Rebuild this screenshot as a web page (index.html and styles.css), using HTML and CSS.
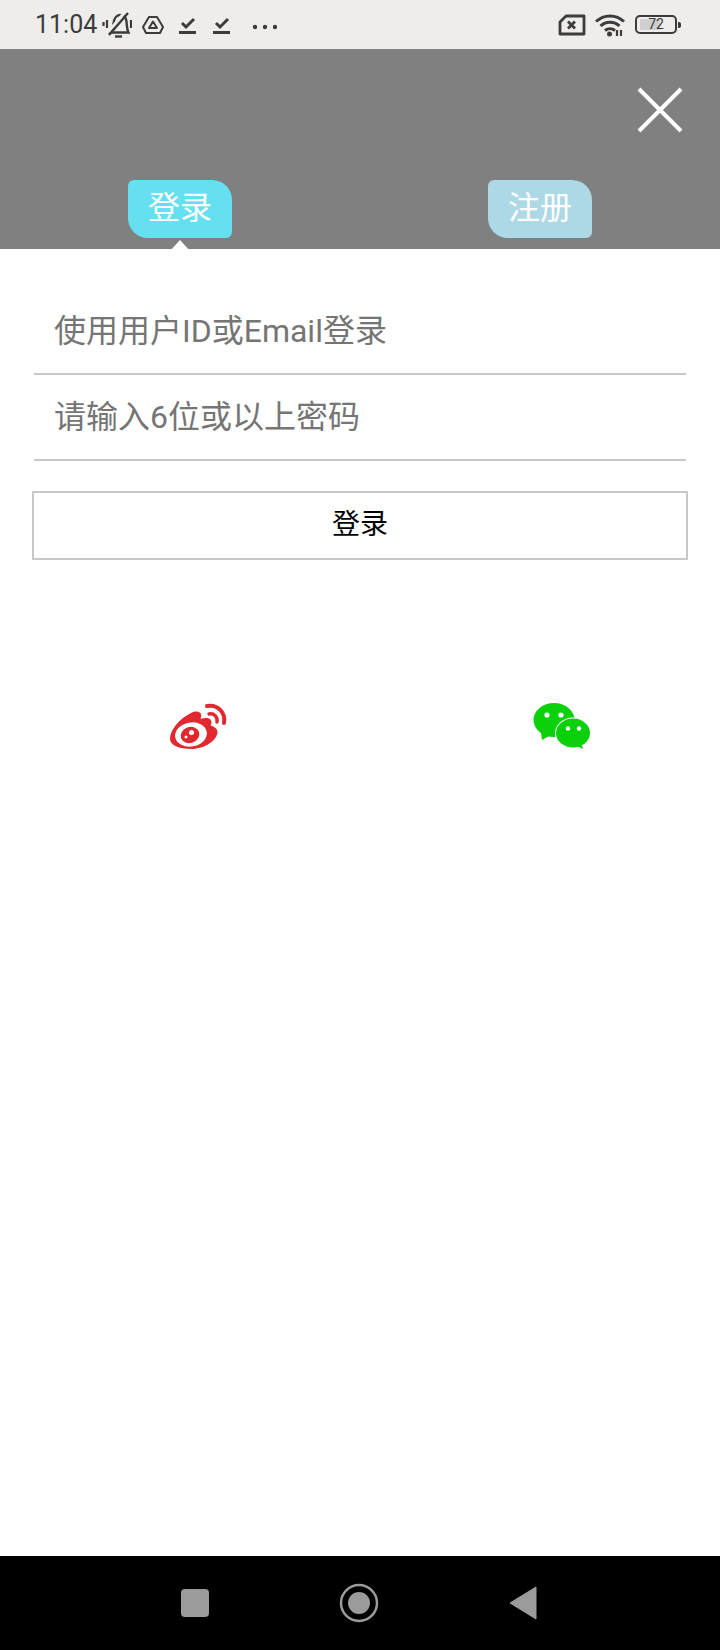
FILE: index.html
```html
<!DOCTYPE html>
<html>
<head>
  <title>登录</title>
  <meta charset="utf-8">
  <meta name="viewport" content="width=device-width, initial-scale=1">
  <link rel="stylesheet" href="styles.css">
</head>
<body>

  <div class="statusbar">
    <span class="time">11:04</span>
    <svg class="ic-bell" viewBox="0 0 30 26" width="30" height="26">
      <path d="M9 20.500c2-2 2-5 2.500-9C12 6.500 14.500 3 18 3c3.500 0 6 2.500 6.500 6.500.4 4 .4 8 2 11z" fill="none" stroke="#3c3c3c" stroke-width="2.400"/>
      <path d="M13 24.500h7" fill="none" stroke="#3c3c3c" stroke-width="2.400"/>
      <path d="M7 19L23 0" fill="none" stroke="#eeedeb" stroke-width="3"/>
      <path d="M7 23L26 1" fill="none" stroke="#3c3c3c" stroke-width="2.400"/>
      <path d="M5 8v8M1.500 10v4M29 8v8" stroke="#3c3c3c" stroke-width="2.200"/>
    </svg>
    <svg class="ic-drive" viewBox="0 0 22 20" width="22" height="20">
      <path d="M7 2h8l6 10-3 6H4L1 12z" fill="none" stroke="#3c3c3c" stroke-width="2" stroke-linejoin="round"/>
      <path d="M11 6.500l4 6.500H7z" fill="none" stroke="#3c3c3c" stroke-width="2" stroke-linejoin="round"/>
    </svg>
    <svg class="ic-check" viewBox="0 0 18 20" width="18" height="20">
      <path d="M3 8l4 4 8-8" fill="none" stroke="#3c3c3c" stroke-width="3"/>
      <path d="M0 17.500h17" stroke="#3c3c3c" stroke-width="3"/>
    </svg>
    <svg class="ic-check" viewBox="0 0 18 20" width="18" height="20">
      <path d="M3 8l4 4 8-8" fill="none" stroke="#3c3c3c" stroke-width="3"/>
      <path d="M0 17.500h17" stroke="#3c3c3c" stroke-width="3"/>
    </svg>
    <svg class="ic-dots" viewBox="0 0 26 6" width="26" height="6">
      <circle cx="3" cy="3" r="2.200" fill="#3c3c3c"/>
      <circle cx="13" cy="3" r="2.200" fill="#3c3c3c"/>
      <circle cx="23" cy="3" r="2.200" fill="#3c3c3c"/>
    </svg>

    <div class="status-right">
      <svg class="ic-sim" viewBox="0 0 28 22" width="28" height="22">
        <path d="M8 2h18v18H2V8z" fill="none" stroke="#3c3c3c" stroke-width="2.800" stroke-linejoin="round"/>
        <path d="M10 7.500l7 7M17 7.500l-7 7" stroke="#3c3c3c" stroke-width="2.800"/>
      </svg>
      <svg class="ic-wifi" viewBox="0 0 30 24" width="30" height="24">
        <path d="M1 8.500c8-7.500 20-7.500 28 0M5.500 13c5.500-5 13.500-5 19 0M10 17.500c3-2.500 7-2.500 10 0" fill="none" stroke="#3c3c3c" stroke-width="3"/>
        <circle cx="14.500" cy="21" r="2.500" fill="#3c3c3c"/>
        <path d="M22 17v6M26 17v6" stroke="#3c3c3c" stroke-width="2.200"/>
      </svg>
      <div class="battery">
        <div class="battery-body">
          <span class="battery-fill"></span>
          <span class="battery-num">72</span>
        </div>
        <span class="battery-nub"></span>
      </div>
    </div>
  </div>

  <div class="top">
    <div class="close-row">
      <svg viewBox="0 0 46 46" width="46" height="46">
        <path d="M2 2l42 42M44 2L2 44" stroke="#fff" stroke-width="4"/>
      </svg>
    </div>
    <div class="tabs">
      <div class="tab tab-on">登录</div>
      <div class="tab tab-off">注册</div>
    </div>
  </div>

  <div class="main">
    <div class="form">
      <div class="field">使用用户ID或Email登录</div>
      <div class="field">请输入6位或以上密码</div>
    </div>
    <div class="submit">登录</div>

    <div class="social">
      <!-- weibo -->
      <svg viewBox="0 0 90 70" width="90" height="70">
        <path d="M20 54c0-9 9-20 21-26 5-2.500 9-1.500 10 1 .5 2 0 3-.5 5 4-1.500 8-1.500 10 .5 1.500 2 1 4 0 6 4 1 7 3.500 7 6.500 0 8-13 17-26 17-13 0-21.500-4-21.500-10z" fill="#e0282e"/>
        <ellipse cx="41" cy="49.500" rx="16" ry="12" fill="#fff" transform="rotate(-10 41 49.500)"/>
        <ellipse cx="40" cy="50" rx="9.500" ry="8" fill="#e0282e" transform="rotate(-20 40 50)"/>
        <circle cx="41.500" cy="47.500" r="2.500" fill="#fff"/>
        <circle cx="36" cy="52" r="1.500" fill="#fff"/>
        <path d="M57 21c10-2 19 6 17 17" fill="none" stroke="#e0282e" stroke-width="4" stroke-linecap="round"/>
        <path d="M59 29c5-1 9 3 8 8" fill="none" stroke="#e0282e" stroke-width="3.400" stroke-linecap="round"/>
      </svg>
      <!-- wechat -->
      <svg viewBox="0 0 90 70" width="90" height="70">
        <path d="M26 48l1 7 9-5z" fill="#0bd10b"/>
        <ellipse cx="39" cy="35" rx="20.500" ry="17" fill="#0bd10b"/>
        <circle cx="32" cy="30" r="2.600" fill="#fff"/>
        <circle cx="46" cy="30" r="2.600" fill="#fff"/>
        <ellipse cx="58" cy="48" rx="18" ry="15.500" fill="#fff"/>
        <path d="M61 60.500l7 3.500-2-7z" fill="#0bd10b"/>
        <ellipse cx="58" cy="48" rx="17" ry="14.500" fill="#0bd10b"/>
        <circle cx="53" cy="43.500" r="2.200" fill="#fff"/>
        <circle cx="64" cy="43.500" r="2.200" fill="#fff"/>
      </svg>
    </div>
  </div>

  <div class="navbar">
    <span class="nav-square"></span>
    <svg viewBox="0 0 40 40" width="40" height="40">
      <circle cx="20" cy="20" r="18" fill="none" stroke="#9b9b9b" stroke-width="2.500"/>
      <circle cx="20" cy="20" r="11" fill="#9b9b9b"/>
    </svg>
    <svg viewBox="0 0 28 34" width="28" height="34">
      <path d="M27 1v32L1 17z" fill="#9b9b9b" stroke="#9b9b9b" stroke-width="1" stroke-linejoin="round"/>
    </svg>
  </div>

</body>
</html>
```

FILE: styles.css
```css
* {
  box-sizing: border-box;
}
body {
  margin: 0;
  height: 1650px;
  display: flex;
  flex-direction: column;
  background-color: #fff;
  font-family: Roboto, "Noto Sans CJK SC", sans-serif;
}
svg {
  display: block;
  flex-shrink: 0;
}

/* status bar */
.statusbar {
  height: 49px;
  display: flex;
  align-items: center;
  padding-left: 35px;
  background-color: #eeedeb;
  color: #3c3c3c;
}
.time {
  font-size: 25px;
  width: 66px;
}
.ic-bell {
  margin-left: 1px;
}
.ic-drive {
  margin-left: 10px;
}
.ic-check {
  margin-left: 15px;
}
.ic-check + .ic-check {
  margin-left: 16px;
}
.ic-dots {
  margin-left: 21px;
  margin-top: 4px;
}
.status-right {
  margin-left: auto;
  padding-right: 39px;
  display: flex;
  align-items: center;
}
.ic-wifi {
  margin-left: 9px;
}
.battery {
  margin-left: 10px;
  display: flex;
  align-items: center;
}
.battery-body {
  position: relative;
  width: 42px;
  height: 19px;
  border: 2px solid #3c3c3c;
  border-radius: 5px;
  display: flex;
  align-items: center;
  justify-content: center;
}
.battery-fill {
  position: absolute;
  left: 3px;
  top: 2px;
  bottom: 2px;
  width: 20px;
  background-color: #cfcfcf;
}
.battery-num {
  position: relative;
  font-size: 14px;
  line-height: 15px;
}
.battery-nub {
  width: 3px;
  height: 6px;
  margin-left: 1px;
  background-color: #3c3c3c;
  border-radius: 0 2px 2px 0;
}

/* grey header with the two tabs */
.top {
  height: 200px;
  background-color: #808080;
  display: flex;
  flex-direction: column;
}
.close-row {
  display: flex;
  justify-content: flex-end;
  padding: 38px 37px 0 0;
}
.tabs {
  display: flex;
  justify-content: space-between;
  padding: 0 128px;
  margin-top: 47px;
}
.tab {
  position: relative;
  width: 104px;
  height: 58px;
  line-height: 56px;
  text-align: center;
  font-size: 32px;
  color: #fff;
  border-radius: 6px 20px 6px 20px;
}
.tab-on {
  background-color: #66e0f0;
}
.tab-off {
  background-color: #add8e6;
}
.tab-on::after {
  content: "";
  position: absolute;
  left: 42px;
  top: 60px;
  border-left: 10px solid transparent;
  border-right: 10px solid transparent;
  border-bottom: 11px solid #fff;
}

/* login form */
.main {
  flex: 1;
  background-color: #fff;
}
.form {
  margin: 40px 34px 0;
}
.field {
  height: 86px;
  line-height: 84px;
  padding-left: 20px;
  font-size: 32px;
  color: #757575;
  border-bottom: 2px solid #c8c8c8;
}
.submit {
  margin: 30px 32px 0;
  height: 69px;
  line-height: 63px;
  text-align: center;
  font-size: 28px;
  color: #000;
  border: 2px solid #c8c8c8;
}
.social {
  display: flex;
  justify-content: space-between;
  padding: 0 115px 0 150px;
  margin-top: 125px;
}

/* navigation bar */
.navbar {
  height: 94px;
  background-color: #000;
  display: flex;
  align-items: center;
  padding: 0 183px 0 181px;
  justify-content: space-between;
}
.nav-square {
  width: 28px;
  height: 28px;
  background-color: #9b9b9b;
  border-radius: 4px;
}
```
